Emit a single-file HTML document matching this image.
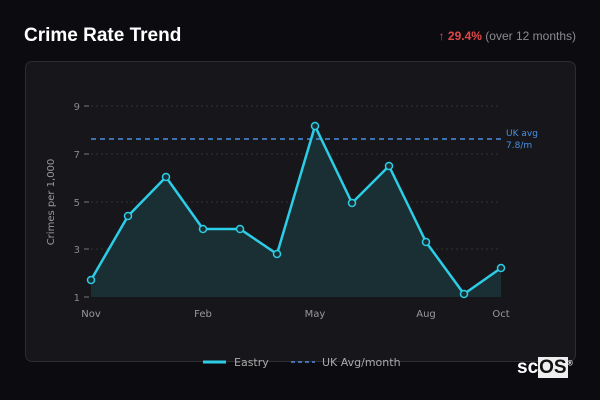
<html><head><style>
body{margin:0;width:600px;height:400px;background:#0c0c10;font-family:"DejaVu Sans","Liberation Sans",sans-serif;overflow:hidden;position:relative}
.t{position:absolute;left:24px;top:25px;color:#fff;font-weight:bold;font-size:19px;font-family:"Liberation Sans",sans-serif}
.r{position:absolute;right:24px;top:29px;font-size:12px;color:#8a8a90;font-family:"Liberation Sans",sans-serif}
.r b{color:#e04848}
.card{position:absolute;left:25px;top:61px;width:549px;height:299px;background:#17171b;border:1px solid #2c2c31;border-radius:7px}
svg{position:absolute;left:0;top:0}
.logo{position:absolute;left:517px;top:357px;font:bold 19px "Liberation Sans",sans-serif;color:#fff}
.logo span{background:#eee;color:#111;padding:0 1px}
</style></head><body>
<div class="t">Crime Rate Trend</div>
<div class="r"><b>↑ 29.4%</b> (over 12 months)</div>
<div class="card"></div>
<svg width="600" height="400" font-family="DejaVu Sans,sans-serif">
<g stroke="#333" stroke-dasharray="2,3" stroke-width="1">
<line x1="91" y1="106" x2="501" y2="106"/><line x1="91" y1="154" x2="501" y2="154"/><line x1="91" y1="202" x2="501" y2="202"/><line x1="91" y1="249" x2="501" y2="249"/></g>
<g fill="#888" font-size="10" text-anchor="end"><text x="80" y="110">9</text><text x="80" y="158">7</text><text x="80" y="206">5</text><text x="80" y="253">3</text><text x="80" y="301">1</text></g>
<g stroke="#777"><line x1="84" y1="106" x2="89" y2="106"/><line x1="84" y1="154" x2="89" y2="154"/><line x1="84" y1="202" x2="89" y2="202"/><line x1="84" y1="249" x2="89" y2="249"/><line x1="84" y1="297" x2="89" y2="297"/></g>
<text x="54" y="202" fill="#999" font-size="10" text-anchor="middle" transform="rotate(-90 54 202)">Crimes per 1,000</text>
<polygon fill="#1a2f33" points="91,297 91,280 128,216 166,177 203,229 240,229 277,254 315,126 352,203 389,166 426,242 464,294 501,268 501,297"/>
<line x1="91" y1="139" x2="501" y2="139" stroke="#4a8fe0" stroke-width="1.5" stroke-dasharray="5,4"/>
<polyline fill="none" stroke="#2ccde6" stroke-width="2.5" stroke-linejoin="round" points="91,280 128,216 166,177 203,229 240,229 277,254 315,126 352,203 389,166 426,242 464,294 501,268"/>
<g fill="#1a2f33" stroke="#2ccde6" stroke-width="1.5"><circle cx="91" cy="280" r="3.5"/><circle cx="128" cy="216" r="3.5"/><circle cx="166" cy="177" r="3.5"/><circle cx="203" cy="229" r="3.5"/><circle cx="240" cy="229" r="3.5"/><circle cx="277" cy="254" r="3.5"/><circle cx="315" cy="126" r="3.5"/><circle cx="352" cy="203" r="3.5"/><circle cx="389" cy="166" r="3.5"/><circle cx="426" cy="242" r="3.5"/><circle cx="464" cy="294" r="3.5"/><circle cx="501" cy="268" r="3.5"/></g>
<g fill="#4a8fe0" font-size="9"><text x="506" y="136">UK avg</text><text x="506" y="148">7.8/m</text></g>
<g fill="#999" font-size="10" text-anchor="middle"><text x="91" y="317">Nov</text><text x="203" y="317">Feb</text><text x="315" y="317">May</text><text x="426" y="317">Aug</text><text x="501" y="317">Oct</text></g>
<line x1="203" y1="362" x2="226" y2="362" stroke="#2ccde6" stroke-width="3"/>
<text x="234" y="366" fill="#aaa" font-size="11">Eastry</text>
<line x1="291" y1="362" x2="315" y2="362" stroke="#4a8fe0" stroke-width="1.5" stroke-dasharray="4,3"/>
<text x="322" y="366" fill="#aaa" font-size="11">UK Avg/month</text>
</svg>
<div class="logo">sc<span>OS</span><sup style="font-size:7px">®</sup></div>
</body></html>
